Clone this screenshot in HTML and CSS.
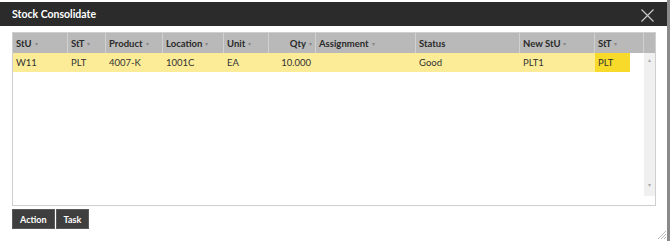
FILE: index.html
```html
<!DOCTYPE html>
<html lang="en">
<head>
    <meta charset="UTF-8">
    <meta name="viewport" content="width=device-width, initial-scale=1.0">
    <title>Stock Consolidate</title>
    <link rel="stylesheet" href="styles.css">
</head>
<body>
    <div class="dialog">
        <div class="titlebar">
            <span class="title">Stock Consolidate</span>
            <svg class="close" width="13" height="13" viewBox="0 0 13 13">
                <path d="M0.5 0.5 L12.5 12.5 M12.5 0.5 L0.5 12.5" stroke="#c8c8c8" stroke-width="1.2" fill="none"/>
            </svg>
        </div>
        <div class="content">
            <div class="grid">
                <div class="grid-head">
                    <div class="th c-stu">StU <i>▾</i></div>
                    <div class="th c-stt">StT <i>▾</i></div>
                    <div class="th c-prod">Product <i>▾</i></div>
                    <div class="th c-loc">Location <i>▾</i></div>
                    <div class="th c-unit">Unit <i>▾</i></div>
                    <div class="th c-qty num">Qty <i>▾</i></div>
                    <div class="th c-asg">Assignment <i>▾</i></div>
                    <div class="th c-status">Status</div>
                    <div class="th c-new">New StU <i>▾</i></div>
                    <div class="th c-stt2">StT <i>▾</i></div>
                    <div class="th c-fill"></div>
                </div>
                <div class="grid-body">
                    <div class="rows">
                        <div class="row selected">
                            <div class="td c-stu">W11</div>
                            <div class="td c-stt">PLT</div>
                            <div class="td c-prod">4007-K</div>
                            <div class="td c-loc">1001C</div>
                            <div class="td c-unit">EA</div>
                            <div class="td c-qty num">10.000</div>
                            <div class="td c-asg"></div>
                            <div class="td c-status">Good</div>
                            <div class="td c-new">PLT1</div>
                            <div class="td c-stt2b active">PLT</div>
                        </div>
                    </div>
                    <div class="scrollbar">
                        <span class="arrow">▴</span>
                        <span class="arrow">▾</span>
                    </div>
                </div>
            </div>
            <div class="buttons">
                <button type="button">Action</button>
                <button type="button">Task</button>
            </div>
        </div>
        <svg class="grip" width="10" height="10" viewBox="0 0 10 10">
            <path d="M9 1 L1 9 M9 4 L4 9 M9 7 L7 9" stroke="#bbb" stroke-width="1" fill="none"/>
        </svg>
    </div>
</body>
</html>
```

FILE: styles.css
```css
body {
    margin: 0;
    background: #ffffff;
    font-family: 'Lato', 'Liberation Sans', sans-serif;
    font-size: 10px;
    color: #333;
}

.dialog {
    position: relative;
    width: 670px;
    height: 241px;
    padding-top: 2px;
    box-sizing: border-box;
    border-right: 3px solid #8a8a8a;
}

.titlebar {
    height: 24px;
    background-color: #2b2b2b;
    display: flex;
    align-items: center;
    justify-content: space-between;
    padding: 0 13px 0 12px;
}

.title {
    color: #ffffff;
    font-weight: bold;
    font-size: 10.5px;
}

.close {
    margin-top: 3px;
}

.content {
    padding: 6px 10px 0 12px;
}

.grid {
    width: 644px;
    height: 174px;
    border: 1px solid #cfcfcf;
    box-sizing: border-box;
    display: flex;
    flex-direction: column;
}

.grid-head {
    display: flex;
    height: 20px;
    background-color: #b9b9b9;
}

.th {
    display: flex;
    align-items: center;
    padding: 0 3px;
    box-sizing: border-box;
    border-right: 1px solid #d0d0d0;
    color: #2a2a2a;
    font-weight: bold;
    font-size: 9.5px;
}

.th i {
    font-style: normal;
    font-weight: normal;
    color: #888;
    font-size: 6px;
    margin-left: 3px;
}

.th.num {
    justify-content: flex-end;
}

.grid-body {
    flex: 1;
    display: flex;
}

.rows {
    flex: 1;
}

.row {
    display: flex;
    height: 19px;
}

.row.selected .td {
    background-color: #fcec98;
}

.row.selected .td.active {
    background-color: #f8da2a;
}

.td {
    display: flex;
    align-items: center;
    padding: 0 3px;
    box-sizing: border-box;
    font-size: 9.5px;
    color: #333;
}

.td.num {
    justify-content: flex-end;
    padding-right: 5px;
}

.c-stu { width: 55px; }
.c-stt { width: 38px; }
.c-prod { width: 57px; }
.c-loc { width: 61px; }
.c-unit { width: 45px; }
.c-qty { width: 47px; }
.c-asg { width: 100px; }
.c-status { width: 104px; }
.c-new { width: 75px; }
.c-stt2 { width: 49px; }
.c-stt2b { width: 35px; }
.c-fill { flex: 1; border-right: none; }

.scrollbar {
    width: 11px;
    margin-bottom: 9px;
    background-color: #f0f0f0;
    display: flex;
    flex-direction: column;
    justify-content: space-between;
    align-items: center;
    padding: 3px 0 7px;
    box-sizing: border-box;
}

.arrow {
    color: #aaa;
    font-size: 6px;
    line-height: 8px;
}

.buttons {
    display: flex;
    gap: 1px;
    margin-top: 3px;
}

button {
    height: 20px;
    padding: 0 7px;
    border: 1px solid #5a5a5a;
    background-color: #3f3f3f;
    color: #ffffff;
    font-family: 'Lato', 'Liberation Sans', sans-serif;
    font-weight: bold;
    font-size: 9px;
    cursor: pointer;
}

.grip {
    position: absolute;
    right: 0;
    bottom: 1px;
}
```
